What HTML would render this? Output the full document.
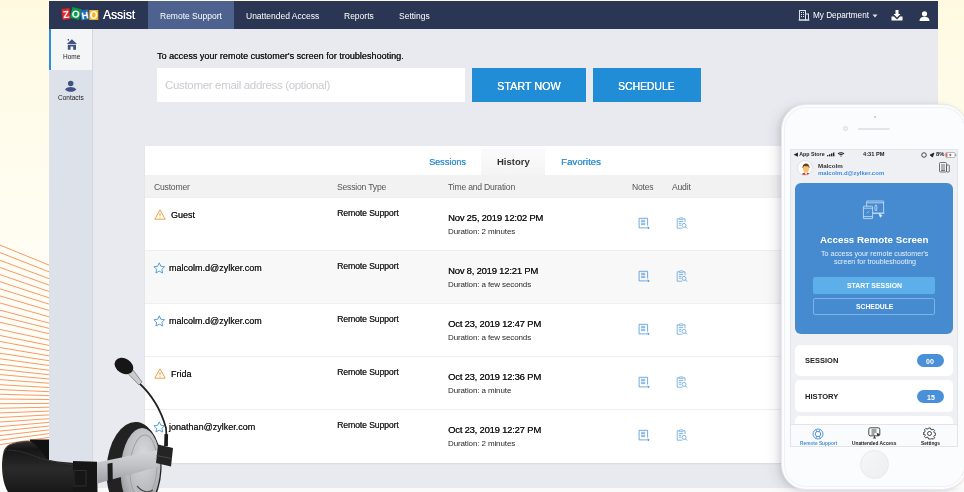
<!DOCTYPE html>
<html><head><meta charset="utf-8">
<style>
*{margin:0;padding:0;box-sizing:border-box}
html,body{width:964px;height:492px;overflow:hidden}
body{position:relative;font-family:"Liberation Sans",sans-serif;background:linear-gradient(180deg,#fff9e0 0%,#fffbe7 15%,#fffdf2 45%,#fffefb 100%);}
.a{position:absolute}
.t{position:absolute;white-space:nowrap;line-height:1;will-change:transform}
#app{left:49px;top:1px;width:889px;height:487px;background:#e9eaef;overflow:hidden}
#top{left:0;top:0;width:889px;height:28px;background:#2a3654}
#side{left:0;top:28px;width:44px;height:460px;background:#dde1e9;border-right:1px solid #d3d7df}
.nav{color:#fff;font-size:8.5px;top:10.7px}
.hd{font-size:8.6px;letter-spacing:-0.2px;color:#555;top:181.8px}
.row{left:96px;width:800px;height:53px;background:#fff;border-top:1px solid #f0f0f0}
.cust{font-size:9px;color:#1e1e1e;text-shadow:0.1px 0 0 #1e1e1e}
.st{font-size:8.8px;letter-spacing:-0.18px;color:#2a2a2a;text-shadow:0.15px 0 0 #2a2a2a}
.dt{font-size:9.5px;letter-spacing:-0.23px;color:#1a1a1a;text-shadow:0.2px 0 0 #1a1a1a}
.du{font-size:8px;letter-spacing:-0.12px;color:#2a2a2a}
</style></head><body>
<svg class="a" style="left:0;top:0" width="50" height="492" viewBox="0 0 50 492" id="lines" fill="none" stroke="#f8935f" stroke-width="0.95"><line x1="-2" y1="244.3" x2="49" y2="265.1"/><line x1="-2" y1="251.8" x2="49" y2="271.8"/><line x1="-2" y1="259.5" x2="49" y2="278.7"/><line x1="-2" y1="266.7" x2="49" y2="285.1"/><line x1="-2" y1="273.9" x2="49" y2="291.5"/><line x1="-2" y1="281.0" x2="49" y2="297.8"/><line x1="-2" y1="288.2" x2="49" y2="304.1"/><line x1="-2" y1="295.3" x2="49" y2="310.4"/><line x1="-2" y1="302.4" x2="49" y2="316.8"/><line x1="-2" y1="309.6" x2="49" y2="323.1"/><line x1="-2" y1="315.7" x2="49" y2="328.4"/><line x1="-2" y1="321.8" x2="49" y2="333.7"/><line x1="-2" y1="329.0" x2="49" y2="340.0"/><line x1="-2" y1="335.1" x2="49" y2="345.4"/><line x1="-2" y1="341.1" x2="49" y2="350.6"/><line x1="-2" y1="347.2" x2="49" y2="355.8"/><line x1="-2" y1="352.9" x2="49" y2="360.7"/><line x1="-2" y1="358.5" x2="49" y2="365.5"/><line x1="-2" y1="364.0" x2="49" y2="370.2"/><line x1="-2" y1="369.3" x2="49" y2="374.7"/><line x1="-2" y1="374.4" x2="49" y2="379.0"/><line x1="-2" y1="379.5" x2="49" y2="383.2"/><line x1="-2" y1="384.6" x2="49" y2="387.5"/><line x1="-2" y1="389.5" x2="49" y2="391.7"/><line x1="-2" y1="394.2" x2="49" y2="395.6"/><line x1="-2" y1="399.0" x2="49" y2="399.5"/><line x1="-2" y1="403.7" x2="49" y2="403.4"/><line x1="-2" y1="408.3" x2="49" y2="407.2"/><line x1="-2" y1="413.0" x2="49" y2="411.1"/><line x1="-2" y1="417.6" x2="49" y2="414.9"/><line x1="-2" y1="422.2" x2="49" y2="418.7"/><line x1="-2" y1="426.8" x2="49" y2="422.4"/><line x1="-2" y1="431.3" x2="49" y2="426.1"/><line x1="-2" y1="435.8" x2="49" y2="429.9"/><line x1="-2" y1="440.4" x2="49" y2="433.6"/><line x1="-2" y1="444.9" x2="49" y2="437.3"/></svg>

<div id="app" class="a">
  <div id="top" class="a">
    <div class="a" style="left:99px;top:0;width:86px;height:28px;background:#4e628f"></div>
    <!-- logo -->
    <svg class="a" style="left:12px;top:5px" width="38" height="16" viewBox="0 0 38 16" font-family="Liberation Sans" font-weight="700" text-anchor="middle" fill="#fff">
      <g transform="rotate(-7 5 8)"><rect x="1" y="2.5" width="8" height="11" fill="#e42527"/><text x="5" y="12" font-size="10">Z</text></g>
      <g transform="rotate(14 14.5 7.5)"><rect x="10" y="2" width="9.5" height="11" fill="#089949"/><text x="14.75" y="11.5" font-size="10">O</text></g>
      <g transform="rotate(-9 23.5 9)"><rect x="19.5" y="4" width="8.5" height="10" fill="#226db4"/><text x="23.75" y="12.7" font-size="9.5">H</text></g>
      <rect x="28.3" y="4" width="9" height="10" fill="#f9b21d"/><text x="32.8" y="12.7" font-size="10">O</text>
    </svg>
    <div class="t" style="left:54px;top:8px;color:#fff;font-size:12px;text-shadow:0.3px 0 0 #fff">Assist</div>
    <div class="t nav" style="left:111px">Remote Support</div>
    <div class="t nav" style="left:197px">Unattended Access</div>
    <div class="t nav" style="left:295px">Reports</div>
    <div class="t nav" style="left:350px">Settings</div>
    <!-- building icon -->
    <svg class="a" style="left:749px;top:8px" width="12" height="12" viewBox="0 0 12 12" fill="none" stroke="#dfe3ea" stroke-width="1">
      <rect x="1.5" y="1.5" width="6" height="9.5"/><rect x="7.5" y="5" width="3" height="6"/>
      <path d="M3 3.5h1M5 3.5h1M3 5.5h1M5 5.5h1M3 7.5h1M5 7.5h1M0.5 11h11"/>
    </svg>
    <div class="t nav" style="left:764px;top:11px;font-size:8.2px">My Department</div>
    <svg class="a" style="left:823px;top:13px" width="6" height="4" viewBox="0 0 6 4"><path d="M0.5 0.5h5L3 3.5z" fill="#dfe3ea"/></svg>
    <!-- download -->
    <svg class="a" style="left:842px;top:9px" width="12" height="11" viewBox="0 0 12 11" fill="#fff">
      <path d="M4.5 0h3v4h2L6 7.5 2.5 4h2z"/><path d="M0.5 6.5h2.5l3 3 3-3h2.5v4h-11z"/>
    </svg>
    <!-- user -->
    <svg class="a" style="left:870px;top:10px" width="11" height="10" viewBox="0 0 11 10" fill="#fff">
      <circle cx="5.5" cy="2.8" r="2.6"/><path d="M0.5 10c0-3 2-4.3 5-4.3s5 1.3 5 4.3z"/>
    </svg>
  </div>
  <div id="side" class="a">
    <div class="a" style="left:0;top:0;width:43px;height:41px;background:#f4f5f6;border-left:2px solid #2d8fdc"></div>
    <svg class="a" style="left:17px;top:10px" width="12" height="12" viewBox="0 0 12 12" fill="#405281">
      <path d="M5.9 0.2L0.8 4.9h10.1z"/><path d="M1.8 5.7h8.2v5h-2.8V7.6H4.5v3.1H1.8z"/><rect x="1.7" y="0" width="1.3" height="1.6"/>
    </svg>
    <div class="t" style="left:14px;top:25px;font-size:6.5px;color:#222">Home</div>
    <svg class="a" style="left:15px;top:51px" width="13" height="12" viewBox="0 0 13 12" fill="#405281">
      <circle cx="6.7" cy="3.5" r="2.75"/><path d="M1 9.4C2.5 7.6 4.5 6.9 6.7 6.9S10.9 7.6 12.3 9.4C10.9 11.1 8.9 11.8 6.7 11.8S2.5 11.1 1 9.4z"/>
    </svg>
    <div class="t" style="left:8.5px;top:66px;font-size:6.5px;color:#222">Contacts</div>
  </div>
  <div class="t" style="left:108px;top:51px;font-size:9.05px;color:#1a1a1a;text-shadow:0.2px 0 0 #1a1a1a">To access your remote customer's screen for troubleshooting.</div>
  <div class="a" style="left:108px;top:67px;width:308px;height:34px;background:#fff"></div>
  <div class="t" style="left:115.5px;top:79.2px;font-size:11.5px;letter-spacing:-0.33px;color:#c9cbcf">Customer email address (optional)</div>
  <div class="a" style="left:423px;top:67px;width:114px;height:34px;background:#208dd6"></div>
  <div class="t" style="left:448px;top:80px;font-size:10.8px;color:#fff;text-shadow:0.2px 0 0 #fff">START NOW</div>
  <div class="a" style="left:544px;top:67px;width:108px;height:34px;background:#208dd6"></div>
  <div class="t" style="left:569px;top:80.6px;font-size:10.4px;color:#fff;text-shadow:0.2px 0 0 #fff">SCHEDULE</div>

  <!-- table -->
  <div class="a" style="left:96px;top:145px;width:800px;height:317px;background:#fff;box-shadow:0 1px 1.5px rgba(0,0,0,0.07)"></div>
  <div class="a" style="left:432px;top:148px;width:64px;height:26px;background:linear-gradient(#fbfbfb,#f4f4f4)"></div>
  <div class="t" style="left:379.5px;top:157px;font-size:9.1px;color:#3590d4;text-shadow:0.25px 0 0 #3590d4">Sessions</div>
  <div class="t" style="left:447.5px;top:155.5px;font-size:9.5px;font-weight:700;color:#333">History</div>
  <div class="t" style="left:511.5px;top:155.7px;font-size:9.7px;color:#3590d4;text-shadow:0.25px 0 0 #3590d4">Favorites</div>
  <div class="a" style="left:96px;top:174px;width:800px;height:23px;background:#f2f2f2"></div>
  <div class="t hd" style="left:104.5px">Customer</div>
  <div class="t hd" style="left:288px">Session Type</div>
  <div class="t hd" style="left:398.5px">Time and Duration</div>
  <div class="t hd" style="left:583px">Notes</div>
  <div class="t hd" style="left:623px">Audit</div>

  <!--ROWS-->
<div class="a" style="left:96px;top:196px;width:800px;height:53px;background:#fff;border-top:1px solid #efefef">
<svg class="a" style="left:8.5px;top:11px" width="12" height="11" viewBox="0 0 12 11" fill="none" stroke="#eaa43d" stroke-width="1"><path d="M6 0.8L0.8 10.2h10.4z" stroke-linejoin="round"/><path d="M6 4v3.3M6 8.3v0.9"/></svg>
<div class="t cust" style="left:26px;top:12.9px">Guest</div>
<div class="t st" style="left:192px;top:11.2px">Remote Support</div>
<div class="t dt" style="left:302.5px;top:14.6px">Nov 25, 2019 12:02 PM</div>
<div class="t du" style="left:302.5px;top:30.4px">Duration: 2 minutes</div>
<svg class="a" style="left:492.5px;top:18.8px" width="12" height="12" viewBox="0 0 12 12" fill="none" stroke="#4a95d6" stroke-width="0.8"><path d="M9.6 8.5V1.3H1.1v9.6h6.6"/><path d="M3 3.3h4.2M3 4.6h4.2M3 6.3h4.2M3 7.6h4.2" stroke-width="0.7"/><path d="M8 10.9h3M10 9.6l1.1 1.3L10 12.2" stroke-width="0.9"/></svg>
<svg class="a" style="left:531px;top:18.8px" width="12" height="12" viewBox="0 0 12 12" fill="none" stroke="#5b9fd8" stroke-width="0.75"><path d="M3.2 1.8H1.2v9.4h5.2M7.4 1.8h1.6v3.4"/><rect x="3.3" y="0.9" width="3.8" height="1.8" rx="0.5"/><path d="M2.8 4.6h4.4M2.8 6.4h2.6M2.8 8.2h2.3"/><circle cx="8" cy="8.4" r="2"/><path d="M9.5 9.9l1.6 1.6" stroke-width="0.9"/></svg>
</div>
<div class="a" style="left:96px;top:249px;width:800px;height:53px;background:#f8f8f8;border-top:1px solid #efefef">
<svg class="a" style="left:7.5px;top:10.5px" width="12.5" height="12.5" viewBox="0 0 12 12" fill="none" stroke="#4a9ad8" stroke-width="0.9"><path d="M6 0.8l1.55 3.3 3.6 0.45-2.65 2.45 0.7 3.55L6 8.8l-3.2 1.75 0.7-3.55L0.85 4.55l3.6-0.45z" stroke-linejoin="round"/></svg>
<div class="t cust" style="left:23.5px;top:12.9px">malcolm.d@zylker.com</div>
<div class="t st" style="left:192px;top:11.2px">Remote Support</div>
<div class="t dt" style="left:302.5px;top:14.6px">Nov 8, 2019 12:21 PM</div>
<div class="t du" style="left:302.5px;top:30.4px">Duration: a few seconds</div>
<svg class="a" style="left:492.5px;top:18.8px" width="12" height="12" viewBox="0 0 12 12" fill="none" stroke="#4a95d6" stroke-width="0.8"><path d="M9.6 8.5V1.3H1.1v9.6h6.6"/><path d="M3 3.3h4.2M3 4.6h4.2M3 6.3h4.2M3 7.6h4.2" stroke-width="0.7"/><path d="M8 10.9h3M10 9.6l1.1 1.3L10 12.2" stroke-width="0.9"/></svg>
<svg class="a" style="left:531px;top:18.8px" width="12" height="12" viewBox="0 0 12 12" fill="none" stroke="#5b9fd8" stroke-width="0.75"><path d="M3.2 1.8H1.2v9.4h5.2M7.4 1.8h1.6v3.4"/><rect x="3.3" y="0.9" width="3.8" height="1.8" rx="0.5"/><path d="M2.8 4.6h4.4M2.8 6.4h2.6M2.8 8.2h2.3"/><circle cx="8" cy="8.4" r="2"/><path d="M9.5 9.9l1.6 1.6" stroke-width="0.9"/></svg>
</div>
<div class="a" style="left:96px;top:302px;width:800px;height:53px;background:#fff;border-top:1px solid #efefef">
<svg class="a" style="left:7.5px;top:10.5px" width="12.5" height="12.5" viewBox="0 0 12 12" fill="none" stroke="#4a9ad8" stroke-width="0.9"><path d="M6 0.8l1.55 3.3 3.6 0.45-2.65 2.45 0.7 3.55L6 8.8l-3.2 1.75 0.7-3.55L0.85 4.55l3.6-0.45z" stroke-linejoin="round"/></svg>
<div class="t cust" style="left:23.5px;top:12.9px">malcolm.d@zylker.com</div>
<div class="t st" style="left:192px;top:11.2px">Remote Support</div>
<div class="t dt" style="left:302.5px;top:14.6px">Oct 23, 2019 12:47 PM</div>
<div class="t du" style="left:302.5px;top:30.4px">Duration: a few seconds</div>
<svg class="a" style="left:492.5px;top:18.8px" width="12" height="12" viewBox="0 0 12 12" fill="none" stroke="#4a95d6" stroke-width="0.8"><path d="M9.6 8.5V1.3H1.1v9.6h6.6"/><path d="M3 3.3h4.2M3 4.6h4.2M3 6.3h4.2M3 7.6h4.2" stroke-width="0.7"/><path d="M8 10.9h3M10 9.6l1.1 1.3L10 12.2" stroke-width="0.9"/></svg>
<svg class="a" style="left:531px;top:18.8px" width="12" height="12" viewBox="0 0 12 12" fill="none" stroke="#5b9fd8" stroke-width="0.75"><path d="M3.2 1.8H1.2v9.4h5.2M7.4 1.8h1.6v3.4"/><rect x="3.3" y="0.9" width="3.8" height="1.8" rx="0.5"/><path d="M2.8 4.6h4.4M2.8 6.4h2.6M2.8 8.2h2.3"/><circle cx="8" cy="8.4" r="2"/><path d="M9.5 9.9l1.6 1.6" stroke-width="0.9"/></svg>
</div>
<div class="a" style="left:96px;top:355px;width:800px;height:53px;background:#fff;border-top:1px solid #efefef">
<svg class="a" style="left:8.5px;top:11px" width="12" height="11" viewBox="0 0 12 11" fill="none" stroke="#eaa43d" stroke-width="1"><path d="M6 0.8L0.8 10.2h10.4z" stroke-linejoin="round"/><path d="M6 4v3.3M6 8.3v0.9"/></svg>
<div class="t cust" style="left:26px;top:12.9px">Frida</div>
<div class="t st" style="left:192px;top:11.2px">Remote Support</div>
<div class="t dt" style="left:302.5px;top:14.6px">Oct 23, 2019 12:36 PM</div>
<div class="t du" style="left:302.5px;top:30.4px">Duration: a minute</div>
<svg class="a" style="left:492.5px;top:18.8px" width="12" height="12" viewBox="0 0 12 12" fill="none" stroke="#4a95d6" stroke-width="0.8"><path d="M9.6 8.5V1.3H1.1v9.6h6.6"/><path d="M3 3.3h4.2M3 4.6h4.2M3 6.3h4.2M3 7.6h4.2" stroke-width="0.7"/><path d="M8 10.9h3M10 9.6l1.1 1.3L10 12.2" stroke-width="0.9"/></svg>
<svg class="a" style="left:531px;top:18.8px" width="12" height="12" viewBox="0 0 12 12" fill="none" stroke="#5b9fd8" stroke-width="0.75"><path d="M3.2 1.8H1.2v9.4h5.2M7.4 1.8h1.6v3.4"/><rect x="3.3" y="0.9" width="3.8" height="1.8" rx="0.5"/><path d="M2.8 4.6h4.4M2.8 6.4h2.6M2.8 8.2h2.3"/><circle cx="8" cy="8.4" r="2"/><path d="M9.5 9.9l1.6 1.6" stroke-width="0.9"/></svg>
</div>
<div class="a" style="left:96px;top:408px;width:800px;height:53px;background:#fff;border-top:1px solid #efefef">
<svg class="a" style="left:7.5px;top:10.5px" width="12.5" height="12.5" viewBox="0 0 12 12" fill="none" stroke="#4a9ad8" stroke-width="0.9"><path d="M6 0.8l1.55 3.3 3.6 0.45-2.65 2.45 0.7 3.55L6 8.8l-3.2 1.75 0.7-3.55L0.85 4.55l3.6-0.45z" stroke-linejoin="round"/></svg>
<div class="t cust" style="left:23.5px;top:12.9px">jonathan@zylker.com</div>
<div class="t st" style="left:192px;top:11.2px">Remote Support</div>
<div class="t dt" style="left:302.5px;top:14.6px">Oct 23, 2019 12:27 PM</div>
<div class="t du" style="left:302.5px;top:30.4px">Duration: 2 minutes</div>
<svg class="a" style="left:492.5px;top:18.8px" width="12" height="12" viewBox="0 0 12 12" fill="none" stroke="#4a95d6" stroke-width="0.8"><path d="M9.6 8.5V1.3H1.1v9.6h6.6"/><path d="M3 3.3h4.2M3 4.6h4.2M3 6.3h4.2M3 7.6h4.2" stroke-width="0.7"/><path d="M8 10.9h3M10 9.6l1.1 1.3L10 12.2" stroke-width="0.9"/></svg>
<svg class="a" style="left:531px;top:18.8px" width="12" height="12" viewBox="0 0 12 12" fill="none" stroke="#5b9fd8" stroke-width="0.75"><path d="M3.2 1.8H1.2v9.4h5.2M7.4 1.8h1.6v3.4"/><rect x="3.3" y="0.9" width="3.8" height="1.8" rx="0.5"/><path d="M2.8 4.6h4.4M2.8 6.4h2.6M2.8 8.2h2.3"/><circle cx="8" cy="8.4" r="2"/><path d="M9.5 9.9l1.6 1.6" stroke-width="0.9"/></svg>
</div>
<!--/ROWS-->
</div>

<div class="a" style="left:0;top:488px;width:964px;height:4px;background:#fafafa"></div>
<!-- HEADSET -->
<svg class="a" style="left:0;top:350px" width="180" height="142" viewBox="0 350 180 142">
  <defs>
    <linearGradient id="silv" x1="0" y1="0" x2="0" y2="1"><stop offset="0" stop-color="#d6d7d9"/><stop offset="0.5" stop-color="#bec0c3"/><stop offset="1" stop-color="#9c9ea1"/></linearGradient>
    <radialGradient id="disk" cx="0.55" cy="0.35" r="0.75"><stop offset="0" stop-color="#d9dadc"/><stop offset="0.6" stop-color="#b8babd"/><stop offset="1" stop-color="#898b8e"/></radialGradient>
    <linearGradient id="band" x1="0" y1="0" x2="0" y2="1"><stop offset="0" stop-color="#2e2e2e"/><stop offset="0.15" stop-color="#161616"/><stop offset="0.55" stop-color="#2a2a2a"/><stop offset="1" stop-color="#181818"/></linearGradient>
  </defs>
  <!-- ear cup -->
  <ellipse cx="134" cy="469" rx="27.5" ry="47" transform="rotate(3 134 469)" fill="#222"/>
  <ellipse cx="140.5" cy="468.5" rx="19.8" ry="40.5" transform="rotate(3 140.5 468.5)" fill="url(#disk)"/>
  <ellipse cx="143.5" cy="467" rx="13.5" ry="32" transform="rotate(3 143.5 467)" fill="none" stroke="#9fa1a4" stroke-width="1"/>
  <path d="M137 486c5 6 11 7 16 4" fill="none" stroke="#4a4a4a" stroke-width="1.2"/>
  <!-- slider strap -->
  <path d="M30 439.5L49 439.5L49 460L30 458z" fill="#111"/>
  <!-- headband -->
  <path d="M8 492C3 484 1 470 2.5 458C3.5 451 5 447 9 445C17 442 25 441 31 441.5C40 447 44 457 49 460L58 461.5L75 463L75 492z" fill="url(#band)"/>
  <path d="M4 452C6 446 10 444 17 442.5C23 441.5 28 441.3 31 441.8" fill="none" stroke="#444" stroke-width="1.2"/>
  <path d="M6 450C14 450 22 451.5 30 454.5C38 457.5 45 460 58 462.5L75 465" fill="none" stroke="#3e3e3e" stroke-width="1" stroke-dasharray="1 0.8"/>
  <!-- connector block on band -->
  <path d="M73 461L97 461.8L97.5 492L73 492z" fill="#161616"/>
  <path d="M74 470.5L86 470.5L86 486L74 486z" fill="none" stroke="#2e2e2e" stroke-width="1"/>
  <!-- silver arm -->
  <path d="M97 462.5L158 450L159 466.5L97.5 483.6z" fill="url(#silv)"/>
  <path d="M107.5 463.8l5-1.1 0.3 18.6-5 1.5z" fill="#1e1e1e"/>
  <!-- right connector -->
  <path d="M158 444.5l15 3.5-2 18.5-15-3.5z" fill="#242424"/>
  <path d="M156.5 455.5l15 3" stroke="#4e4e4e" stroke-width="0.8"/>
  <!-- mic boom -->
  <path d="M139 383C151 394 161 410 166 428L167 446" fill="none" stroke="#222" stroke-width="1.7"/>
  <path d="M164.5 434l3.6 0.3-0.4 12-3.6-0.3z" fill="#1a1a1a"/>
  <!-- cone -->
  <path d="M125 370.5L130 366L142 382L139 385z" fill="#c9cbce" stroke="#55575a" stroke-width="0.6"/>
  <!-- foam -->
  <ellipse cx="124" cy="366" rx="10" ry="7.5" transform="rotate(32 124 366)" fill="#161616"/>
</svg>

<!-- PHONE -->
<div class="a" style="left:781px;top:104px;width:187px;height:386px;border-radius:25px;background:#fbfcfd;border:1px solid #e6e8eb;box-shadow:-2px 1px 4px rgba(90,95,110,0.14),-6px 3px 12px rgba(110,115,130,0.14),inset 0 0 0 2px #fdfdfe,inset 0 0 0 2.8px #eceef1"></div>
<div class="a" style="left:873.5px;top:115.5px;width:2px;height:2px;border-radius:1px;background:#c4c7cc"></div>
<div class="a" style="left:842.5px;top:126px;width:5px;height:5px;border-radius:3px;background:#f0f1f3;border:1px solid #dadde1"></div>
<div class="a" style="left:858px;top:127.5px;width:32px;height:2px;border-radius:1px;background:#e3e5e8"></div>
<div class="a" style="left:859.5px;top:450px;width:29px;height:29px;border-radius:15px;background:linear-gradient(135deg,#f6f7f8,#eceef0);border:1px solid #e8eaec"></div>
<div class="a" id="screen" style="left:790px;top:149px;width:168px;height:298px;background:#eef0f4;overflow:hidden;border:1px solid #e2e4e8">
  <!-- status bar -->
  <div class="t" style="left:3px;top:1.8px;font-size:5.3px;font-weight:700;color:#222">&#9664; App Store</div>
  <svg class="a" style="left:36px;top:2.3px" width="20" height="6" viewBox="0 0 20 6" fill="#222">
    <rect x="0" y="3.1" width="1.4" height="1.2"/><rect x="2" y="2.3" width="1.4" height="2"/><rect x="4" y="1.4" width="1.4" height="2.9"/><rect x="6" y="0.5" width="1.4" height="3.8"/>
    <path d="M10.6 1.5a4.6 3.8 0 0 1 6.8 0l-0.7 0.7a3.5 2.8 0 0 0-5.4 0z M12 2.6a2.8 2.2 0 0 1 4 0l-0.7 0.7a1.7 1.3 0 0 0-2.6 0z M14 3.5l0.8 0.6-0.8 0.6-0.8-0.6z"/>
  </svg>
  <div class="t" style="left:72px;top:2px;font-size:5.7px;font-weight:700;color:#222">4:31 PM</div>
  <svg class="a" style="left:130px;top:1.8px" width="36" height="6" viewBox="0 0 36 6" fill="none" stroke="#222" stroke-width="0.8">
    <circle cx="3" cy="3" r="2.3"/><path d="M9 3l4-2-1.5 4z" fill="#222"/>
  </svg>
  <div class="t" style="left:144.5px;top:2.4px;font-size:5.8px;font-weight:700;color:#222">8%</div>
  <svg class="a" style="left:153.5px;top:1.8px" width="12" height="6" viewBox="0 0 12 6">
    <rect x="0.5" y="0.5" width="9.5" height="5" rx="1" fill="#fff" stroke="#999" stroke-width="0.7"/><rect x="1.2" y="1.2" width="1.2" height="3.6" fill="#e33"/><rect x="10.3" y="2" width="1" height="2" fill="#999"/><path d="M5.5 1.3L4 3.2h1.4L4.8 4.8 6.7 2.7H5.3z" fill="#222"/>
  </svg>
  <!-- header -->
  <div class="a" style="left:6px;top:10.2px;width:16px;height:16px;border-radius:8px;background:#fff;border:0.5px solid #dde0e4;overflow:hidden">
    <svg width="16" height="16" viewBox="0 0 16 16"><ellipse cx="8" cy="7.5" rx="3" ry="3.8" fill="#f5c16b"/><path d="M4.8 6.5c0-3 1.3-4 3.2-4s3.2 1 3.2 4l-0.6-1.5c-1 0.4-2.5 0.4-4.8 0z" fill="#8b3b21"/><path d="M3 16c0-3 2-4.5 5-4.5s5 1.5 5 4.5z" fill="#c83a2a"/><path d="M6.8 11.5h2.4l-1.2 3z" fill="#fff"/><path d="M4.6 7a3.4 3.4 0 0 1 6.8 0" fill="none" stroke="#333" stroke-width="0.6"/></svg>
  </div>
  <div class="t" style="left:26.5px;top:12.7px;font-size:6.2px;font-weight:700;color:#333">Malcolm</div>
  <div class="t" style="left:26.5px;top:19.8px;font-size:6px;font-weight:700;color:#3f8fd8">malcolm.d@zylker.com</div>
  <svg class="a" style="left:148px;top:11.5px" width="11" height="11" viewBox="0 0 11 11" fill="none" stroke="#555" stroke-width="0.8">
    <rect x="0.5" y="0.5" width="7" height="9.5" rx="1"/><rect x="7.5" y="3" width="2.8" height="7" rx="0.6"/><path d="M2 3h4M2 5h4M2 7h4M2 8.5h4"/>
  </svg>
  <!-- blue card -->
  <div class="a" style="left:4px;top:33px;width:158px;height:151px;border-radius:6px;background:#468bd0"></div>
  <svg class="a" style="left:71px;top:50px" width="24" height="20" viewBox="0 0 24 20" fill="none" stroke="#d8e7f7" stroke-width="0.75">
    <rect x="4.6" y="1" width="17" height="12.2" rx="0.4"/><path d="M4.6 2.8h17M9 13.2h13.5"/><path d="M14 4.8c-1.6 1.5-1.6 4.6 0 6.2c1.2-1.6 1.2-4.6 0-6.2z"/>
    <rect x="1.4" y="6.2" width="9.2" height="12.4" rx="0.4" fill="#468bd0"/><path d="M1.4 8.2h9.2M1.4 16.6h9.2M5 13.2l1.8-1.8"/>
    <path d="M17 13.6l3.2 2.2-1.3 0.3-0.5 1.3z" fill="#e6f0fa"/>
  </svg>
  <div class="t" style="left:28.5px;top:85px;font-size:9.8px;font-weight:700;color:#fff">Access Remote Screen</div>
  <div class="t" style="left:30px;top:101.3px;font-size:7.1px;color:#e8f1fa">To access your remote customer's</div>
  <div class="t" style="left:43px;top:109.3px;font-size:7.1px;color:#e8f1fa">screen for troubleshooting</div>
  <div class="a" style="left:22px;top:127px;width:122px;height:17px;border-radius:2px;background:#5cafe8"></div>
  <div class="t" style="left:55.5px;top:133px;font-size:6.9px;font-weight:700;color:#fff">START SESSION</div>
  <div class="a" style="left:22px;top:148px;width:122px;height:17px;border-radius:2px;border:0.8px solid #7db3e6"></div>
  <div class="t" style="left:64.5px;top:154px;font-size:6.8px;font-weight:700;color:#fff">SCHEDULE</div>
  <!-- cards -->
  <div class="a" style="left:4px;top:194.5px;width:158px;height:31.5px;border-radius:5px;background:#fff"></div>
  <div class="t" style="left:14px;top:207px;font-size:7.5px;font-weight:700;color:#222">SESSION</div>
  <div class="a" style="left:126px;top:204px;width:27px;height:13px;border-radius:7px;background:#4a90d9"></div>
  <div class="t" style="left:135px;top:208px;font-size:7px;font-weight:700;color:#fff">00</div>
  <div class="a" style="left:4px;top:230px;width:158px;height:31.5px;border-radius:5px;background:#fff"></div>
  <div class="t" style="left:14px;top:242.5px;font-size:7.6px;font-weight:700;color:#222">HISTORY</div>
  <div class="a" style="left:126px;top:239.5px;width:27px;height:13px;border-radius:7px;background:#4a90d9"></div>
  <div class="t" style="left:135.8px;top:243.5px;font-size:7px;font-weight:700;color:#fff">15</div>
  <div class="a" style="left:4px;top:266px;width:158px;height:20px;border-radius:5px;background:#fff"></div>
  <!-- tab bar -->
  <div class="a" style="left:0;top:274px;width:168px;height:24px;background:#fafbfc;border-top:1px solid #e3e5e9"></div>
  <svg class="a" style="left:21px;top:277.5px" width="12" height="12" viewBox="0 0 12 12" fill="none" stroke="#4a90d9" stroke-width="0.9">
    <circle cx="6" cy="6" r="5"/><circle cx="6" cy="6" r="2.7"/><path d="M3.8 1.5l1 2.2M8.2 1.5l-1 2.2M3.8 10.5l1-2.2M8.2 10.5l-1-2.2"/>
  </svg>
  <div class="t" style="left:9px;top:291.8px;font-size:4.8px;font-weight:700;color:#4a90d9">Remote Support</div>
  <svg class="a" style="left:76.5px;top:277px" width="13" height="12" viewBox="0 0 13 12" fill="none" stroke="#333" stroke-width="0.9">
    <rect x="0.8" y="0.8" width="11" height="8" rx="1.5"/><path d="M3.5 3h5M3.5 5h5M3.5 7h3M5 11h3M6.5 9v2"/><path d="M9 6.5l2.5 1-1 0.4-0.4 1z" fill="#333"/>
  </svg>
  <div class="t" style="left:61px;top:291.8px;font-size:4.8px;font-weight:700;color:#222">Unattended Access</div>
  <svg class="a" style="left:131.5px;top:277px" width="13" height="13" viewBox="0 0 13 13" fill="none" stroke="#333" stroke-width="0.9">
    <path d="M5.5 1h2l0.3 1.4 1.2 0.5 1.2-0.8 1.4 1.4-0.8 1.2 0.5 1.2 1.4 0.3v2l-1.4 0.3-0.5 1.2 0.8 1.2-1.4 1.4-1.2-0.8-1.2 0.5L7.5 12h-2l-0.3-1.4-1.2-0.5-1.2 0.8-1.4-1.4 0.8-1.2-0.5-1.2L0.3 7.5v-2l1.4-0.3 0.5-1.2-0.8-1.2 1.4-1.4 1.2 0.8 1.2-0.5z"/><circle cx="6.5" cy="6.5" r="2"/>
  </svg>
  <div class="t" style="left:129.5px;top:291.8px;font-size:4.8px;font-weight:700;color:#222">Settings</div>
</div>

</body></html>
